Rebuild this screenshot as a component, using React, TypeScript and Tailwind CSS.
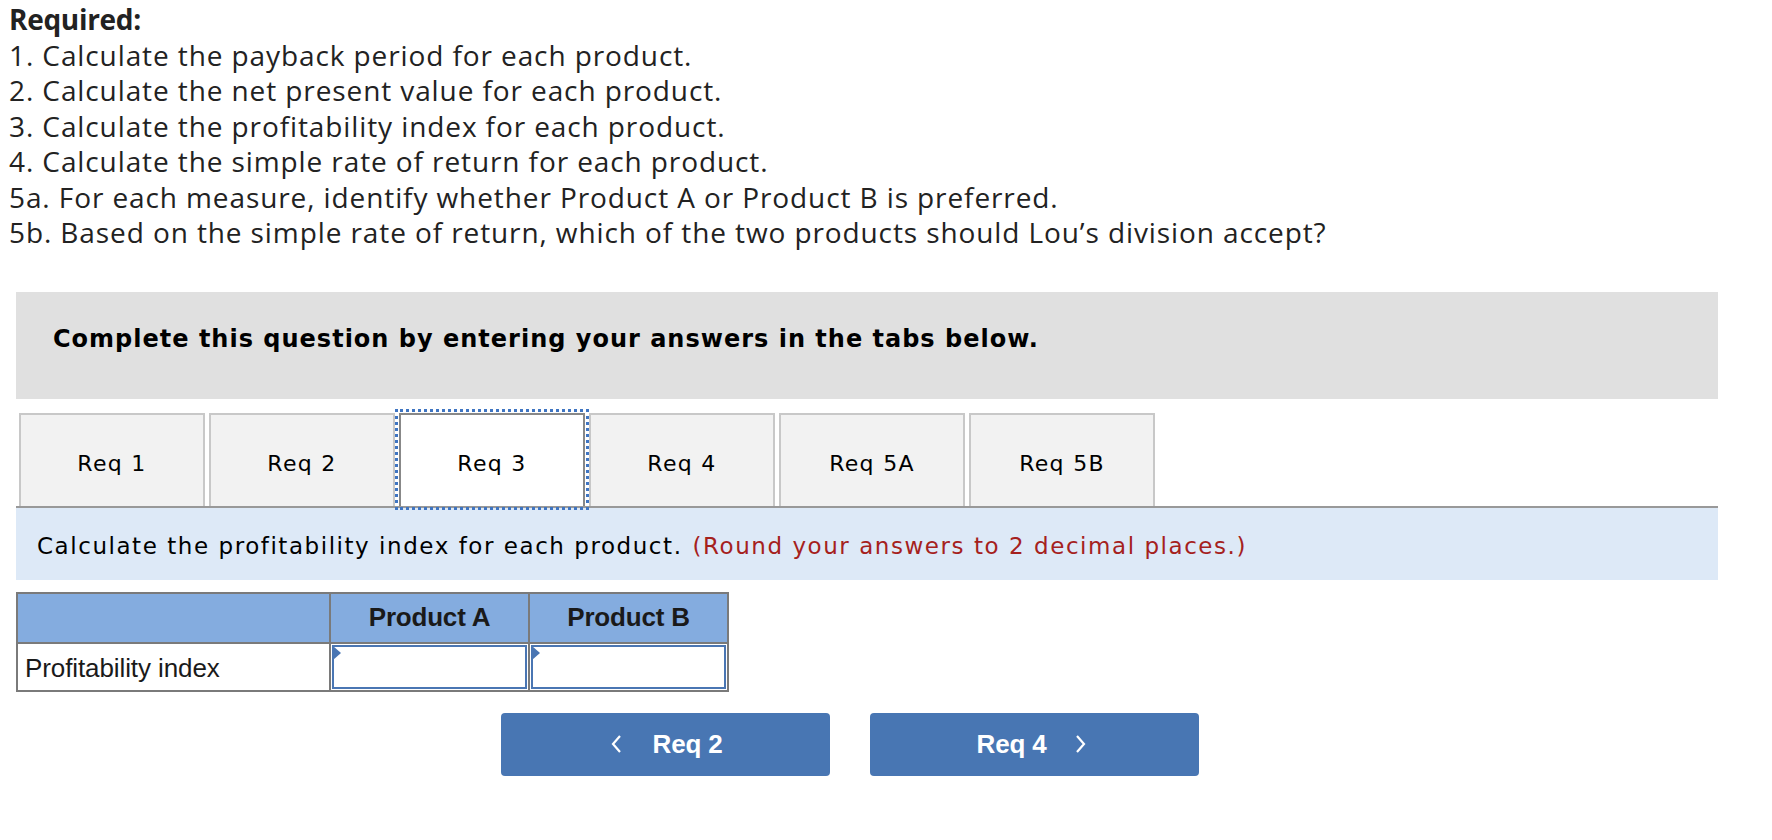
import React from 'react';

const tabs = ['Req 1', 'Req 2', 'Req 3', 'Req 4', 'Req 5A', 'Req 5B'];

const requirements = [
  '1. Calculate the payback period for each product.',
  '2. Calculate the net present value for each product.',
  '3. Calculate the profitability index for each product.',
  '4. Calculate the simple rate of return for each product.',
  '5a. For each measure, identify whether Product A or Product B is preferred.',
  '5b. Based on the simple rate of return, which of the two products should Lou\u2019s division accept?',
];

const App: React.FC = () => {
  const active = 'Req 3';

  return (
    <div className="w-[1772px] h-[840px] bg-white text-black overflow-hidden">
      {/* Required list */}
      <div className="pl-[9px] pt-[2px] text-[28px] leading-[35.5px] tracking-[0.9px] text-[#222] font-['Open_Sans',sans-serif]">
        <div className="font-bold tracking-[-0.3px]">Required:</div>
        {requirements.map((r) => (
          <div key={r}>{r}</div>
        ))}
      </div>

      {/* Instructions box */}
      <div className="ml-[16px] mt-[41px] w-[1702px] h-[107px] bg-[#e0e0e0] pl-[37px] pt-[29px]">
        <span className="font-['DejaVu_Sans',sans-serif] font-bold text-[24px] tracking-[1px]">
          Complete this question by entering your answers in the tabs below.
        </span>
      </div>

      {/* Tabs */}
      <div className="ml-[16px] mt-[14px] w-[1702px] flex gap-[4px] pl-[3px] border-b-2 border-[#999]">
        {tabs.map((t) => (
          <div
            key={t}
            className={
              t === active
                ? 'w-[186px] h-[93px] flex items-center justify-center pt-[6px] bg-white border-2 border-b-0 border-[#888] outline-dotted outline-[3px] outline-offset-1 outline-[#3f75c2] font-["DejaVu_Sans",sans-serif] text-[22px] tracking-[1.3px]'
                : 'w-[186px] h-[93px] flex items-center justify-center pt-[6px] bg-[#f2f2f2] border-2 border-b-0 border-[#c8c8c8] font-["DejaVu_Sans",sans-serif] text-[22px] tracking-[1.3px]'
            }
          >
            {t}
          </div>
        ))}
      </div>

      {/* Instruction band */}
      <div className="ml-[16px] w-[1702px] h-[72px] bg-[#dde9f7] flex items-center pl-[21px] pt-[6px] font-['DejaVu_Sans',sans-serif] text-[23px] tracking-[1.55px]">
        <span>Calculate the profitability index for each product.</span>
        <span className="ml-[10px] text-[#a5211d]">(Round your answers to 2 decimal places.)</span>
      </div>

      {/* Table */}
      <table className="ml-[16px] mt-[12px] border-collapse font-['Liberation_Sans',sans-serif]">
        <thead>
          <tr className="bg-[#84acdf] h-[50px]">
            <th className="w-[313px] border-2 border-[#7a7a7a]"></th>
            <th className="w-[199px] border-2 border-[#7a7a7a] text-[26px] font-bold tracking-[-0.2px] text-[#1a1a1a]">Product A</th>
            <th className="w-[199px] border-2 border-[#7a7a7a] text-[26px] font-bold tracking-[-0.2px] text-[#1a1a1a]">Product B</th>
          </tr>
        </thead>
        <tbody>
          <tr className="h-[48px]">
            <td className="border-2 border-[#7a7a7a] pl-[7px] pt-[4px] text-[26px] tracking-[-0.1px] text-[#1a1a1a]">Profitability index</td>
            {[0, 1].map((i) => (
              <td key={i} className="border-2 border-[#7a7a7a] p-0 relative">
                <div className="h-[44px] m-[1px] border-2 border-[#4a76b3] bg-white" />
                <div className="absolute left-[2px] top-[2px] w-0 h-0 border-t-[7px] border-b-[7px] border-l-[8px] border-t-transparent border-b-transparent border-l-[#4a76b3]" />
              </td>
            ))}
          </tr>
        </tbody>
      </table>

      {/* Navigation buttons */}
      <div className="flex gap-[40px] ml-[501px] mt-[21px] font-['Liberation_Sans',sans-serif]">
        <button className="w-[329px] h-[63px] bg-[#4876b3] rounded-[4px] text-white flex items-center justify-center">
          <svg width="14" height="22" viewBox="0 0 14 22" className="mr-[30px]">
            <path d="M11 3 L4 11 L11 19" stroke="white" strokeWidth="2.2" fill="none" />
          </svg>
          <span className="text-[26px] font-bold tracking-[-0.2px]">Req 2</span>
        </button>
        <button className="w-[329px] h-[63px] bg-[#4876b3] rounded-[4px] text-white flex items-center justify-center pr-[4px]">
          <span className="text-[26px] font-bold tracking-[-0.2px]">Req 4</span>
          <svg width="14" height="22" viewBox="0 0 14 22" className="ml-[28px]">
            <path d="M3 3 L10 11 L3 19" stroke="white" strokeWidth="2.2" fill="none" />
          </svg>
        </button>
      </div>
    </div>
  );
};

export default App;
